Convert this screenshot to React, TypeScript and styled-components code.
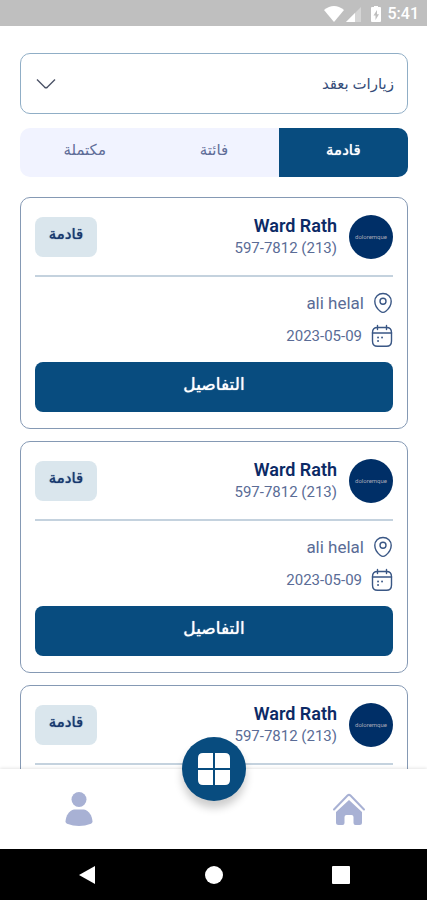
import React, { useState } from "react";
import styled, { createGlobalStyle, css } from "styled-components";

const navy = "#084c7f";
const ink = "#17386f";
const muted = "#5a6c96";
const line = "#8599b4";

const heavy = css`
  text-shadow: 0 0 1px currentColor;
`;

const GlobalStyle = createGlobalStyle`
  *, *::before, *::after { box-sizing: border-box; }
  body { margin: 0; background: #fff; }
  button, select { font: inherit; color: inherit; border: 0; margin: 0; padding: 0; background: none; cursor: pointer; }
  body { font-family: Roboto, "DejaVu Sans", sans-serif; color: ${ink}; }
`;

const Screen = styled.div`
  display: flex;
  flex-direction: column;
  height: 100vh;
  background: #fff;
`;

const StatusBar = styled.header`
  display: flex;
  flex: none;
  align-items: center;
  justify-content: flex-end;
  height: 26px;
  padding: 2px 8px 0;
  background: #bfbfbf;
  color: #fff;
  font-size: 16px;
  font-weight: 500;
  line-height: 20px;
  svg { display: block; }
`;

const StatusIcons = styled.div`
  display: flex;
  align-items: center;
  gap: 2px;
  margin-right: 6px;
  svg:last-child { margin-left: 7px; }
`;

const Content = styled.main`
  display: flex;
  flex: 1;
  min-height: 0;
  flex-direction: column;
  padding: 27px 19px 0 20px;
  overflow-y: auto;
  scrollbar-width: none;
`;

const SelectWrap = styled.label`
  display: grid;
  flex: none;
  align-items: center;
  > * { grid-area: 1 / 1; }
  svg { justify-self: end; margin-left: 16px; pointer-events: none; }
`;

const Select = styled.select`
  appearance: none;
  width: 100%;
  height: 61px;
  padding: 0 13px 0 48px;
  border: 1px solid #90aec6;
  border-radius: 10px;
  background: #fff;
  color: #354c78;
  font-size: 15px;
  line-height: 24px;
`;

const Tabs = styled.div`
  display: grid;
  flex: none;
  grid-template-columns: repeat(3, 1fr);
  height: 49px;
  margin-top: 14px;
  border-radius: 10px;
  background: #f1f3ff;
  overflow: hidden;
`;

const Tab = styled.button<{ $active: boolean }>`
  padding-bottom: 6px;
  background: ${(p) => (p.$active ? navy : "transparent")};
  color: ${(p) => (p.$active ? "#fff" : "#5f6d98")};
  font-size: 15px;
  ${(p) => p.$active && heavy}
`;

const List = styled.div`
  display: flex;
  flex: none;
  flex-direction: column;
  gap: 12px;
  margin-top: 20px;
  padding-bottom: 40px;
`;

const Card = styled.article`
  flex: none;
  padding: 17px 14px 16px;
  border: 1px solid ${line};
  border-radius: 10px;
  background: #fff;
`;

const CardHead = styled.div`
  display: flex;
  align-items: center;
  gap: 12px;
  height: 62px;
  padding-bottom: 17px;
  border-bottom: 2px solid #c4d2de;
`;

const Avatar = styled.div`
  display: grid;
  flex: none;
  place-items: center;
  width: 44px;
  height: 44px;
  border-radius: 50%;
  background: #002f67;
  color: #a8a9b8;
  font-size: 6px;
`;

const Person = styled.div`
  flex: 1;
  min-width: 0;
`;

const Name = styled.h2`
  margin: 0;
  color: #0c2a66;
  font-size: 18px;
  font-weight: 600;
  line-height: 23px;
`;

const Phone = styled.div`
  color: ${muted};
  font-size: 15px;
  line-height: 22px;
  text-align: right;
`;

const Badge = styled.span`
  width: 62px;
  height: 40px;
  border-radius: 8px;
  background: #dae6ed;
  color: ${ink};
  font-size: 15px;
  line-height: 35px;
  text-align: center;
  ${heavy}
`;

const Details = styled.div`
  display: grid;
  gap: 9px;
  padding: 14px 0;
`;

const Detail = styled.div<{ $size: number }>`
  display: flex;
  align-items: center;
  gap: 9px;
  height: 24px;
  color: ${muted};
  font-size: ${(p) => p.$size}px;
  line-height: 24px;
  svg { flex: none; color: #3a5785; }
`;

const DetailsButton = styled.button`
  display: block;
  width: 100%;
  height: 50px;
  padding-bottom: 6px;
  border-radius: 8px;
  background: ${navy};
  color: #fff;
  font-size: 17px;
  ${heavy}
`;

const BottomNav = styled.nav`
  position: relative;
  display: grid;
  flex: none;
  grid-template-columns: repeat(3, 1fr);
  height: 80px;
  padding: 0 11px;
  background: #fff;
  box-shadow: 0 -1px 3px rgba(0, 0, 0, 0.1);
`;

const NavItem = styled.button`
  display: grid;
  place-items: center;
  color: #a8b1d4;
`;

const Fab = styled.button`
  position: absolute;
  top: -32px;
  left: 50%;
  display: grid;
  place-items: center;
  width: 64px;
  height: 64px;
  margin-left: -32px;
  border-radius: 50%;
  background: ${navy};
  box-shadow: 0 7px 9px rgba(0, 0, 0, 0.2);
`;

const SystemNav = styled.footer`
  display: grid;
  flex: none;
  grid-template-columns: repeat(3, 1fr);
  height: 51px;
  padding: 0 23px;
  background: #000;
`;

const SystemButton = styled.button`
  display: grid;
  place-items: center;
`;

const WifiIcon = () => (
  <svg width="20" height="16" viewBox="0 0 20 16" fill="#fff" aria-hidden="true">
    <path d="M0 4Q10-4 20 4L10 16Z" />
  </svg>
);

const SignalIcon = () => (
  <svg width="15" height="15" viewBox="0 0 15 15" fill="#fff" aria-hidden="true">
    <path d="M15 0v15H0Z" opacity=".35" />
    <path d="M9 6v9H0Z" />
  </svg>
);

const BatteryIcon = () => (
  <svg width="12" height="16" viewBox="0 0 12 16" fill="#fff" aria-hidden="true">
    <path
      fillRule="evenodd"
      d="M4 0h4v1h2q1 0 1 1v13q0 1-1 1H2q-1 0-1-1V2q0-1 1-1h2ZM7 4 3.500 9.500h2V14L9 8.300H7Z"
    />
  </svg>
);

const ChevronIcon = () => (
  <svg width="20" height="12" viewBox="0 0 20 12" fill="none" stroke="#4d5468" strokeWidth="1.4" aria-hidden="true">
    <path d="m1 1.500 7.500 7.600q1.500 1.300 3 0L19 1.500" />
  </svg>
);

const PinIcon = () => (
  <svg width="20" height="22" viewBox="0 0 20 22" fill="none" stroke="currentColor" strokeWidth="1.4" aria-hidden="true">
    <path d="M10 1.500c4.700 0 8.200 3.300 8.200 7.800 0 3.800-2.200 7.400-5.400 10q-2.800 2.200-5.600 0C4 16.700 1.800 13.100 1.800 9.300c0-4.500 3.500-7.800 8.200-7.800Z" />
    <circle cx="10" cy="9.300" r="3" />
  </svg>
);

const CalendarIcon = () => (
  <svg width="22" height="24" viewBox="0 0 22 24" fill="none" stroke="currentColor" strokeWidth="1.4" strokeLinecap="round" aria-hidden="true">
    <path d="M6.500 1.500v4M15.500 1.500v4M1.500 9h19" />
    <path d="M6.500 3.500h9c3.500 0 5 1.800 5 5V17c0 3.600-1.500 5.300-5 5.300h-9c-3.500 0-5-1.700-5-5.300V8.500c0-3.200 1.500-5 5-5Z" />
    <path d="M7 13.500h.1M11 13.500h.1M7 17h.1" strokeWidth="1.800" />
  </svg>
);

const GridIcon = () => (
  <svg width="32" height="32" viewBox="0 0 32 32" fill="#fff" aria-hidden="true">
    <path d="M5 0h10v15H0V5q0-5 5-5ZM17 0h10q5 0 5 5v10H17ZM0 17h15v15H5q-5 0-5-5ZM17 17h15v10q0 5-5 5H17Z" />
  </svg>
);

const HomeIcon = () => (
  <svg width="34" height="34" viewBox="0 0 34 34" aria-hidden="true">
    <path d="M2 17.500 15.500 3.500q1.500-1.300 3 0L32 17.500" fill="none" stroke="currentColor" strokeWidth="2" strokeLinecap="round" />
    <path d="M17 8 30 20v10.500q0 2.500-2.500 2.500h-4q-2 0-2-2v-6q0-2-2-2h-5q-2 0-2 2v6q0 2-2 2h-4Q4 33 4 30.500V20Z" fill="currentColor" />
  </svg>
);

const UserIcon = () => (
  <svg width="28" height="34" viewBox="0 0 28 34" fill="currentColor" aria-hidden="true">
    <circle cx="14" cy="7.500" r="7.500" />
    <path d="M9 17.500h10c5 1 8 6 8.500 12q0 1.500-1.500 2.200-12 4.500-24 0Q.5 31 .5 29.500C1 23.500 4 18.500 9 17.500Z" />
  </svg>
);

const tabs = ["قادمة", "فائتة", "مكتملة"];

const visits = [1, 2, 3].map((id) => ({
  id,
  name: "Ward Rath",
  phone: "597-7812 (213)",
  place: "ali helal",
  date: "2023-05-09",
  status: "قادمة",
  avatar: "doloremque",
}));

type Visit = (typeof visits)[number];

function VisitCard({ visit }: { visit: Visit }) {
  return (
    <Card>
      <CardHead>
        <Avatar>{visit.avatar}</Avatar>
        <Person>
          <Name>{visit.name}</Name>
          <Phone dir="ltr">{visit.phone}</Phone>
        </Person>
        <Badge>{visit.status}</Badge>
      </CardHead>
      <Details>
        <Detail $size={17}>
          <PinIcon />
          {visit.place}
        </Detail>
        <Detail $size={15}>
          <CalendarIcon />
          {visit.date}
        </Detail>
      </Details>
      <DetailsButton type="button">التفاصيل</DetailsButton>
    </Card>
  );
}

export default function App() {
  const [active, setActive] = useState(0);
  return (
    <Screen>
      <GlobalStyle />
      <StatusBar>
        <StatusIcons>
          <WifiIcon />
          <SignalIcon />
          <BatteryIcon />
        </StatusIcons>
        <time>5:41</time>
      </StatusBar>
      <Content dir="rtl" lang="ar">
        <SelectWrap>
          <Select aria-label="زيارات بعقد">
            <option>زيارات بعقد</option>
          </Select>
          <ChevronIcon />
        </SelectWrap>
        <Tabs role="tablist">
          {tabs.map((label, i) => (
            <Tab key={label} type="button" role="tab" aria-selected={i === active} $active={i === active} onClick={() => setActive(i)}>
              {label}
            </Tab>
          ))}
        </Tabs>
        <List>
          {visits.map((visit) => (
            <VisitCard key={visit.id} visit={visit} />
          ))}
        </List>
      </Content>
      <BottomNav dir="rtl">
        <NavItem type="button" aria-label="الرئيسية">
          <HomeIcon />
        </NavItem>
        <span />
        <NavItem type="button" aria-label="الحساب">
          <UserIcon />
        </NavItem>
        <Fab type="button" aria-label="القائمة">
          <GridIcon />
        </Fab>
      </BottomNav>
      <SystemNav>
        <SystemButton type="button" aria-label="Back">
          <svg width="18" height="20" viewBox="0 0 18 20" fill="#fff">
            <path d="M17 1v18L1 10Z" />
          </svg>
        </SystemButton>
        <SystemButton type="button" aria-label="Home">
          <svg width="18" height="18" viewBox="0 0 18 18" fill="#fff">
            <circle cx="9" cy="9" r="9" />
          </svg>
        </SystemButton>
        <SystemButton type="button" aria-label="Recents">
          <svg width="18" height="18" viewBox="0 0 18 18" fill="#fff">
            <rect width="18" height="18" rx="1" />
          </svg>
        </SystemButton>
      </SystemNav>
    </Screen>
  );
}
